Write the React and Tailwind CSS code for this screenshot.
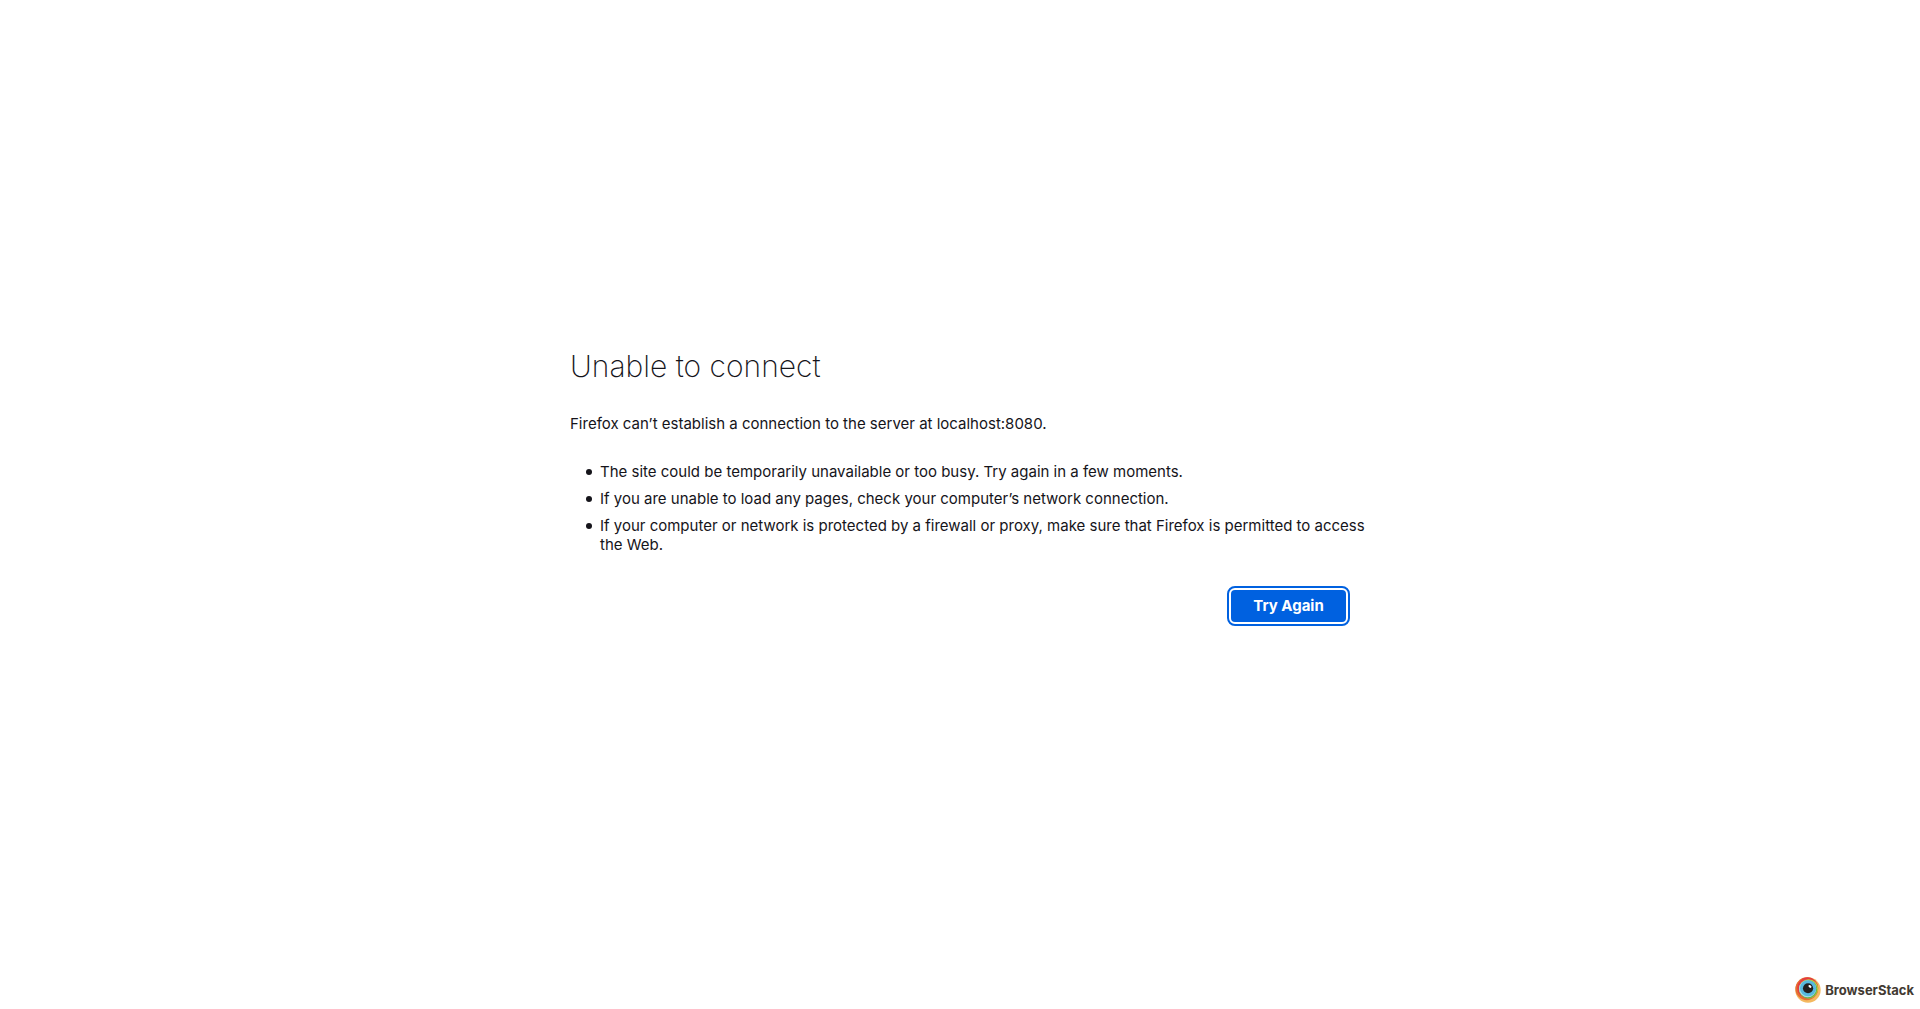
const tips = [
  "The site could be temporarily unavailable or too busy. Try again in a few moments.",
  "If you are unable to load any pages, check your computer’s network connection.",
  "If your computer or network is protected by a firewall or proxy, make sure that Firefox is permitted to access the Web.",
];

function EyeLogo() {
  return (
    <svg viewBox="0 0 490 490" className="size-[26px]" aria-hidden="true">
      <circle cx="245" cy="245" r="239" fill="#F4B960" />
      <circle cx="222" cy="221" r="215" fill="#E66F32" />
      <circle cx="239" cy="205" r="198" fill="#E43C41" />
      <circle cx="256" cy="222" r="181" fill="#BDD041" />
      <circle cx="247" cy="231" r="172" fill="#6DB54C" />
      <circle cx="237" cy="221" r="162" fill="#AEDAE6" />
      <circle cx="246" cy="212" r="153" fill="#56B8DE" />
      <circle cx="246" cy="212" r="96" fill="#221F1F" />
      <ellipse cx="282" cy="178" rx="32" ry="22" transform="rotate(40 282 178)" fill="#fff" />
    </svg>
  );
}

export default function App() {
  return (
    <div className="relative flex min-h-screen flex-col items-center justify-center bg-white px-12 pb-[41px] font-['Inter',sans-serif] text-[15px] text-[#15141a]">
      <main className="flex w-full max-w-[780px] flex-col">
        <h1 className="text-[30px] leading-10 font-extralight">Unable to connect</h1>
        <p className="mt-7 leading-5">Firefox can’t establish a connection to the server at localhost:8080.</p>
        <ul className="mt-7 -mr-4 space-y-2 pl-4">
          {tips.map((tip) => (
            <li key={tip} className="flex gap-2 leading-[19px]">
              <span className="mt-[7px] size-1.5 shrink-0 rounded-full bg-[#15141a]" />
              <span>{tip}</span>
            </li>
          ))}
        </ul>
        <button className="mt-9 mr-1 h-8 min-w-[115px] self-end rounded bg-[#0061e0] px-5 font-bold text-white outline-2 outline-offset-2 outline-[#0061e0]">
          Try Again
        </button>
      </main>
      <footer className="absolute right-1.5 bottom-1.5 flex items-center gap-1 text-[13px] leading-[26px] font-bold text-[#423a32]">
        <EyeLogo />
        <span>BrowserStack</span>
      </footer>
    </div>
  );
}
